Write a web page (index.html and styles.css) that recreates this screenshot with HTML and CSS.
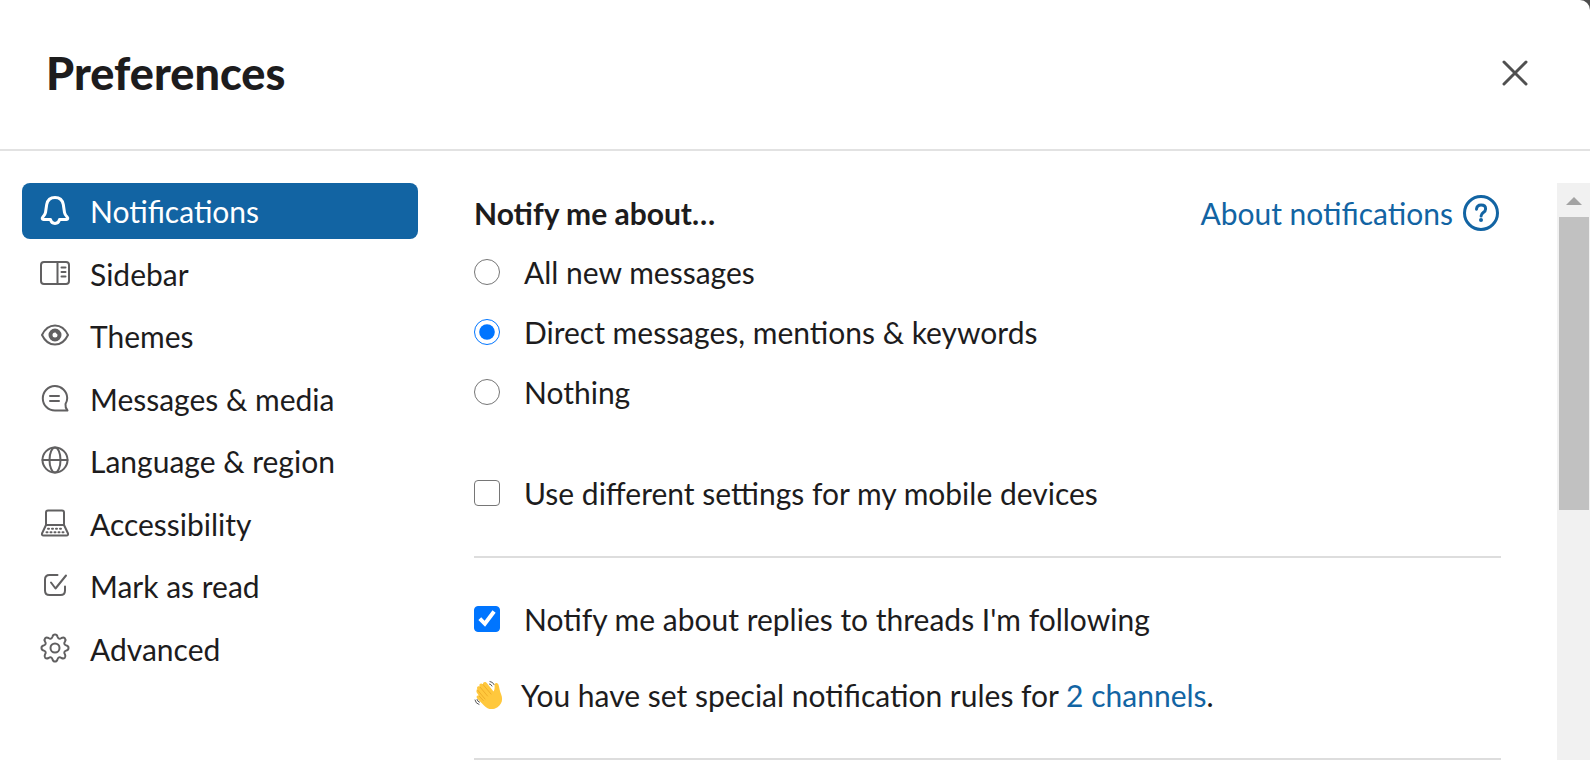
FILE: index.html
```html
<!DOCTYPE html>
<html lang="en">
<head>
    <meta charset="utf-8">
    <title>Preferences</title>
    <link rel="stylesheet" href="styles.css">
</head>
<body>
    <div class="modal" role="dialog" aria-labelledby="modal-title">
        <header class="modal-header">
            <h1 id="modal-title">Preferences</h1>
            <button type="button" class="close-btn" aria-label="Close">
                <svg width="26" height="26" viewBox="0 0 26 26"><path d="M2 2l22 22M24 2L2 24"/></svg>
            </button>
        </header>
        <div class="modal-body">
            <nav class="sidebar">
                <button type="button" class="tab active">
                    <svg class="icon" viewBox="0 0 30 30"><path d="M15 2.500c-4.500 0-7.500 2.700-8.300 7L5.500 17.500c-.3 1.800-1.300 3.200-2.800 4.800-.9 1-.5 2.200.8 2.200h7c.5 2.300 2 4 4.500 4s4-1.700 4.500-4h7c1.300 0 1.700-1.200.8-2.200-1.500-1.600-2.500-3-2.800-4.800L23.300 9.500c-.8-4.300-3.800-7-8.300-7z"/></svg>
                    Notifications
                </button>
                <button type="button" class="tab">
                    <svg class="icon" viewBox="0 0 30 30"><rect x="1" y="4" width="28" height="22" rx="3"/><path d="M17.500 4v22M21.500 9.500h4M21.500 14h4M21.500 18.500h4"/></svg>
                    Sidebar
                </button>
                <button type="button" class="tab">
                    <svg class="icon" viewBox="0 0 30 30"><path d="M2 15c3-6.300 7.500-9.500 13-9.500s10 3.200 13 9.500c-3 6.300-7.500 9.500-13 9.500S5 21.300 2 15z"/><circle class="thick" cx="15" cy="15" r="4.500"/><path d="M17 11.500q-.5 2 1.500 2"/></svg>
                    Themes
                </button>
                <button type="button" class="tab">
                    <svg class="icon" viewBox="0 0 30 30"><path d="M27.500 27.500H15A12.200 12.200 0 1 1 27.200 15c0 2.200-.6 4.300-1.700 6.100-.3 2.400.4 4.500 2 6.400zM10 13h9M10 18h9"/></svg>
                    Messages &amp; media
                </button>
                <button type="button" class="tab">
                    <svg class="icon" viewBox="0 0 30 30"><circle cx="15" cy="15" r="12.500"/><path d="M2.500 15h25"/><ellipse cx="15" cy="15" rx="5.500" ry="12.500"/></svg>
                    Language &amp; region
                </button>
                <button type="button" class="tab">
                    <svg class="icon" viewBox="0 0 30 30"><path d="M6 17V4.500Q6 2.500 8 2.500h14q2 0 2 2V17M6 17h18l4 8.500q.5 2-1.500 2h-23q-2 0-1.500-2z"/><path class="keys" d="M8 20.700h15M6.500 24.200h18"/></svg>
                    Accessibility
                </button>
                <button type="button" class="tab">
                    <svg class="icon" viewBox="0 0 30 30"><path d="M17.500 5H9.500Q5 5 5 9.500v11Q5 25 9.500 25h11q4.500 0 4.500-4.500v-4M11 12.500l4.500 6L26 5.500"/></svg>
                    Mark as read
                </button>
                <button type="button" class="tab">
                    <svg class="icon" viewBox="0 0 30 30"><path d="M15 1.500Q17 1.500 17.400 3.500Q18.500 7 21.500 5Q23.500 4 24.800 5.200Q26 6.500 25 8.500Q23 11.500 26.500 12.600Q28.500 13 28.500 15Q28.500 17 26.500 17.400Q23 18.500 25 21.500Q26 23.500 24.800 24.800Q23.500 26 21.500 25Q18.500 23 17.400 26.500Q17 28.500 15 28.500Q13 28.500 12.600 26.500Q11.500 23 8.500 25Q6.500 26 5.200 24.800Q4 23.500 5 21.500Q7 18.500 3.500 17.400Q1.500 17 1.500 15Q1.500 13 3.500 12.600Q7 11.500 5 8.500Q4 6.500 5.200 5.200Q6.500 4 8.500 5Q11.500 7 12.600 3.500Q13 1.500 15 1.500z"/><circle cx="15" cy="15" r="4.500"/></svg>
                    Advanced
                </button>
            </nav>
            <main class="content">
                <section class="group">
                    <div class="row heading">
                        <h2>Notify me about…</h2>
                        <a class="help" href="#about">
                            About notifications
                            <svg width="36" height="36" viewBox="0 0 36 36"><circle cx="18" cy="18" r="16.500"/><path d="M13.500 14.200c.3-2.800 2-4.200 4.600-4.200 2.700 0 4.500 1.500 4.500 3.900 0 3.800-4.500 3.500-4.500 7.100"/><circle class="dot" cx="18" cy="25" r="2"/></svg>
                        </a>
                    </div>
                    <div class="row">
                        <input type="radio" name="notify" id="notify-all">
                        <label for="notify-all">All new messages</label>
                    </div>
                    <div class="row">
                        <input type="radio" name="notify" id="notify-direct" checked>
                        <label for="notify-direct">Direct messages, mentions &amp; keywords</label>
                    </div>
                    <div class="row">
                        <input type="radio" name="notify" id="notify-none">
                        <label for="notify-none">Nothing</label>
                    </div>
                    <div class="row mobile">
                        <input type="checkbox" id="mobile">
                        <label for="mobile">Use different settings for my mobile devices</label>
                    </div>
                </section>
                <section class="group">
                    <div class="row">
                        <input type="checkbox" id="threads" checked>
                        <label for="threads">Notify me about replies to threads I'm following</label>
                    </div>
                    <div class="row rules">
                        <svg class="wave" viewBox="0 0 30 30"><path class="hand" d="M3.500 9.500C2 7 4.500 5.300 6 7l-.3-.5C4.500 3.800 7.300 2.300 9 4.500 8.500 1.800 11.500 1 13 3.200l6.500 8.300c1.200-2 1.300-3.800 1-6.200-.3-2.600 3-3.200 4-.6 1 3.300 1 5.500 2.700 9.800 2 5.200.5 9.800-3.700 12.700-4.500 3-9.800 2.500-13.500-1.700L3.200 18.500c-1.500-2 .3-3.700 2-2.500L3 13c-1.500-2.200.3-4 .5-3.500z"/><path class="fingers" d="M6 7l7.500 9M9 4.500l8 9.500M3.500 10l7.500 9M5.200 16l4 4.500"/><path class="motion" d="M16 1.500q3 .3 4 3M15.500 4q1.800.3 2.500 2M1 20q.5 3.500 4 4.500M3 19.500q.5 2 2.500 2.700"/></svg>
                        <p>You have set special notification rules for <a href="#channels">2 channels</a>.</p>
                    </div>
                </section>
            </main>
            <div class="scrollbar" aria-hidden="true">
                <svg class="arrow" viewBox="0 0 16 8"><path d="M0 8l8-8 8 8z"/></svg>
                <div class="thumb"></div>
            </div>
        </div>
    </div>
</body>
</html>
```
FILE: styles.css
```css
* {
    box-sizing: border-box;
}
html, body {
    height: 100%;
    margin: 0;
}
body {
    background-color: #4d4d4d;
    color: #1d1c1d;
    font-family: Lato, sans-serif;
    font-size: 30px;
    line-height: 40px;
    overflow: hidden;
}
h1, h2, p {
    margin: 0;
}
a {
    color: #1264a3;
    text-decoration: none;
}
button {
    border: none;
    background: none;
    color: inherit;
    font: inherit;
    cursor: pointer;
}
.modal {
    display: flex;
    flex-direction: column;
    height: 100%;
    background-color: white;
    border-top-right-radius: 10px;
    overflow: hidden;
}
.modal-header {
    display: flex;
    align-items: center;
    justify-content: space-between;
    padding: 45px 56px 48px 46px;
    border-bottom: 2px solid #e2e2e2;
}
.modal-header h1 {
    font-size: 45px;
    line-height: 56px;
    font-weight: 900;
}
.close-btn {
    display: flex;
    padding: 6px;
}
.close-btn svg {
    fill: none;
    stroke: #505050;
    stroke-width: 3;
    stroke-linecap: round;
}
.modal-body {
    display: flex;
    flex: 1;
    min-height: 0;
    padding-top: 32px;
    overflow: hidden;
}

/* left menu */
.sidebar {
    display: flex;
    flex-direction: column;
    align-self: flex-start;
    justify-content: space-between;
    flex: none;
    width: 396px;
    min-height: 494px;
    margin-left: 22px;
}
.tab {
    display: flex;
    align-items: center;
    gap: 20px;
    padding: 8px 18px;
    border-radius: 8px;
    text-align: left;
}
.tab.active {
    background-color: #1264a3;
    color: white;
}
.icon {
    width: 30px;
    height: 30px;
    margin-bottom: 2px;
    fill: none;
    stroke: #616061;
    stroke-width: 2;
    stroke-linecap: round;
    stroke-linejoin: round;
}
.active .icon {
    stroke: white;
    stroke-width: 3;
}
.icon .thick {
    stroke-width: 4;
}
.icon .keys {
    stroke-dasharray: 1 3;
}

/* settings */
.content {
    flex: 1;
    padding: 0 56px;
}
.group {
    padding-bottom: 33px;
    border-bottom: 2px solid #dddddd;
}
.group + .group {
    padding-top: 31px;
}
.row {
    display: flex;
    align-items: center;
    min-height: 60px;
}
.row input {
    width: 26px;
    height: 26px;
    margin: 0 24px 0 0;
}
.row input[type=checkbox] {
    appearance: none;
    border: 1px solid #767676;
    border-radius: 4px;
}
.row input[type=checkbox]:checked {
    border-color: #0075ff;
    background-color: #0075ff;
}
.row input[type=checkbox]:checked::before {
    content: "";
    display: block;
    height: 100%;
    background-color: white;
    clip-path: polygon(14% 54%, 26% 43%, 40% 57%, 73% 14%, 86% 24%, 42% 82%);
}
.row.heading {
    justify-content: space-between;
    min-height: 59px;
    padding-right: 2px;
}
.heading h2 {
    font-size: 30px;
    font-weight: 700;
}
.help {
    display: flex;
    align-items: center;
    gap: 10px;
}
.help svg {
    fill: none;
    stroke: #1264a3;
    stroke-width: 3;
    stroke-linecap: round;
}
.help .dot {
    fill: #1264a3;
    stroke: none;
}
.mobile {
    margin-top: 41px;
}
.rules {
    gap: 17px;
    margin-top: 16px;
}
.wave {
    width: 30px;
    height: 30px;
}
.hand {
    fill: #ffc83d;
}
.fingers, .motion {
    fill: none;
    stroke: #f0ae2a;
    stroke-linecap: round;
}
.motion {
    stroke: #555555;
}

/* scrollbar */
.scrollbar {
    display: flex;
    flex-direction: column;
    flex: none;
    width: 33px;
    padding: 14px 1px 0 2px;
    background-color: #f1f1f1;
}
.arrow {
    align-self: center;
    width: 16px;
    height: 8px;
    margin-bottom: 12px;
    fill: #a3a3a3;
}
.thumb {
    height: 52%;
    background-color: #c1c1c1;
}
```
